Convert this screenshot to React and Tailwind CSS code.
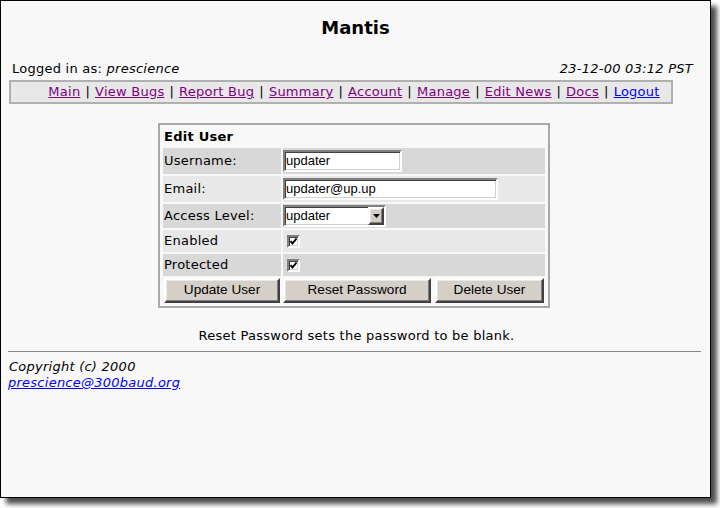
import React from "react";

const links = [
  { label: "Main" },
  { label: "View Bugs" },
  { label: "Report Bug" },
  { label: "Summary" },
  { label: "Account" },
  { label: "Manage" },
  { label: "Edit News" },
  { label: "Docs" },
  { label: "Logout", fresh: true },
];

const sunken =
  "border-2 border-t-[#808080] border-l-[#808080] border-b-white border-r-white shadow-[inset_1px_1px_0_#404040,inset_-1px_-1px_0_#d4d0c8]";
const raised =
  "border-2 border-t-white border-l-white border-b-[#404040] border-r-[#404040] shadow-[inset_-1px_-1px_0_#808080,inset_1px_1px_0_#e8e8e8] bg-[#d4d0c8]";

function Check() {
  return (
    <div className={`w-[13px] h-[13px] bg-white ${sunken} flex items-center justify-center`}>
      <svg width="9" height="9" viewBox="0 0 9 9">
        <path d="M1.5 4 L3.5 6.5 L7.5 1.5" stroke="#000" strokeWidth="2" fill="none" />
      </svg>
    </div>
  );
}

function Row({ label, dark, h, children }) {
  return (
    <div className={`flex gap-[2px] ${h}`}>
      <div className={`w-[118px] flex items-center pl-[1px] ${dark ? "bg-[#d8d8d8]" : "bg-[#e8e8e8]"}`}>{label}</div>
      <div className={`flex-1 flex items-center ${dark ? "bg-[#d8d8d8]" : "bg-[#e8e8e8]"}`}>{children}</div>
    </div>
  );
}

function Button({ w, children }) {
  return (
    <div className={`${w} h-[25px] ${raised} flex items-center justify-center text-[13.6px] tracking-normal text-black font-['Liberation_Sans',Arial,sans-serif]`}>
      {children}
    </div>
  );
}

export default function App() {
  return (
    <div className="w-[720px] h-[508px] bg-white font-['DejaVu_Sans',Verdana,sans-serif] text-[13px] tracking-[0.25px] text-black">
      <div className="w-[711px] h-[498px] border border-black bg-[#f8f8f8] shadow-[6px_6px_5px_rgba(0,0,0,0.7)] flex flex-col">
        <div className="mt-[15px] h-[24px] leading-[24px] text-center text-[18px] font-bold tracking-normal">Mantis</div>

        <div className="mt-[21px] h-[16px] leading-[16px] flex justify-between pl-[11px] pr-[17px]">
          <div>
            Logged in as: <span className="italic">prescience</span>
          </div>
          <div className="italic">23-12-00 03:12 PST</div>
        </div>

        <div className="mt-[3px] ml-[8px] w-[664px] h-[24px] border-2 border-[#b0b0b0] bg-[#e8e8e8] flex items-center justify-center pl-[26px]">
          {links.map((l, i) => (
            <React.Fragment key={l.label}>
              {i > 0 && <span className="mx-[3px]">|</span>}
              <a href="#" className={`underline mx-[2px] ${l.fresh ? "text-[#0000ff]" : "text-[#800080]"}`}>
                {l.label}
              </a>
            </React.Fragment>
          ))}
        </div>

        <div className="mt-[19px] ml-[157px] w-[392px] border-2 border-[#a8a8a8] px-[3px] pt-[2px] pb-[3px] flex flex-col gap-[2px]">
          <div className="h-[19px] flex items-center pl-[1px] font-bold">Edit User</div>
          <Row label="Username:" dark h="h-[26px]">
            <div className={`w-[119px] h-[22px] bg-white ${sunken} flex items-center px-[1px] tracking-normal font-['Liberation_Sans',Arial,sans-serif]`}>updater</div>
          </Row>
          <Row label="Email:" h="h-[26px]">
            <div className={`w-[215px] h-[22px] bg-white ${sunken} flex items-center px-[1px] tracking-normal font-['Liberation_Sans',Arial,sans-serif]`}>updater@up.up</div>
          </Row>
          <Row label="Access Level:" dark h="h-[24px]">
            <div className={`w-[103px] h-[22px] bg-white ${sunken} flex items-center justify-between pl-[1px] tracking-normal font-['Liberation_Sans',Arial,sans-serif]`}>
              <span>updater</span>
              <div className={`w-[16px] h-[18px] ${raised} flex items-center justify-center`}>
                <svg width="7" height="4" viewBox="0 0 7 4">
                  <path d="M0 0 H7 L3.5 4 Z" fill="#000" />
                </svg>
              </div>
            </div>
          </Row>
          <Row label="Enabled" h="h-[22px]">
            <div className="ml-[4px]">
              <Check />
            </div>
          </Row>
          <Row label="Protected" dark h="h-[22px]">
            <div className="ml-[4px]">
              <Check />
            </div>
          </Row>
          <div className="flex pl-[1px]">
            <Button w="w-[116px]">Update User</Button>
            <div className="ml-[3px]">
              <Button w="w-[148px]">Reset Password</Button>
            </div>
            <div className="ml-[4px]">
              <Button w="w-[109px]">Delete User</Button>
            </div>
          </div>
        </div>

        <div className="mt-[20px] h-[16px] leading-[16px] text-center pl-[2px]">Reset Password sets the password to be blank.</div>

        <div className="mt-[7px] ml-[7px] mr-[9px] h-px bg-[#888888]"></div>

        <div className="mt-[7px] h-[16px] leading-[16px] pl-[8px] italic">Copyright (c) 2000</div>
        <div className="h-[16px] leading-[16px] pl-[7px]">
          <a href="#" className="italic underline text-[#0000ff]">prescience@300baud.org</a>
        </div>
      </div>
    </div>
  );
}
